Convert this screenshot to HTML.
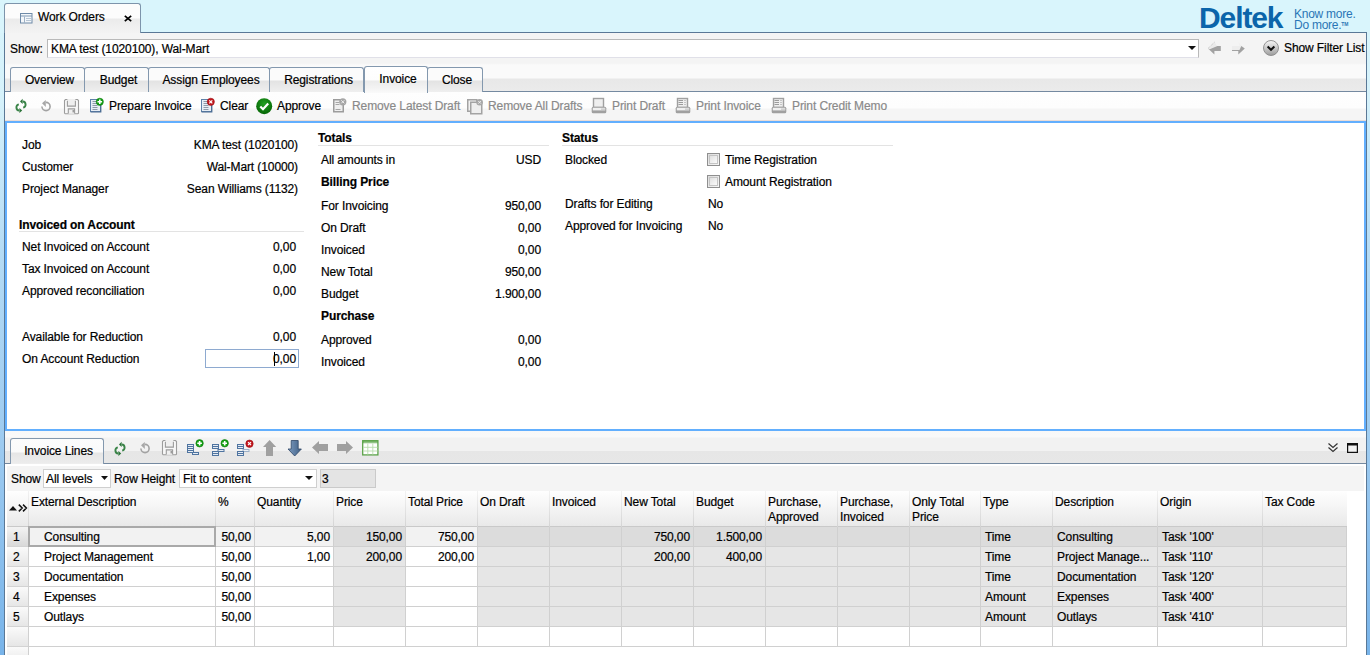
<!DOCTYPE html>
<html><head><meta charset="utf-8">
<style>
*{margin:0;padding:0;box-sizing:border-box}
html,body{width:1370px;height:655px;overflow:hidden}
body{position:relative;font-family:"Liberation Sans",sans-serif;font-size:12px;color:#000;-webkit-text-stroke:0.2px;
background:linear-gradient(to bottom,#d9f5fc 0px,#d6f2fb 100px,#b6dcf5 250px,#9ccaf0 450px,#78b4ea 655px)}
.a{position:absolute}
.t{position:absolute;white-space:nowrap;line-height:15px;letter-spacing:-0.1px}
.r{text-align:right}
.b{font-weight:bold}
.g{color:#8a8a8a}
.tab{position:absolute;top:67px;height:25px;border:1px solid #8398ae;border-bottom:none;border-radius:3px 3px 0 0;
background:linear-gradient(#fbfbfb 0,#fbfbfb 12px,#e3e3e3 13px,#efefef 24px)}
.tab span{position:absolute;left:4px;right:0;top:5px;text-align:center;line-height:15px;white-space:nowrap;letter-spacing:-0.1px}
svg{position:absolute;overflow:visible}
</style></head><body>

<div class="a" style="left:0;top:0;width:1370px;height:33px;background:#d9f5fc"></div>
<div class="a" style="left:4px;top:32px;width:1363px;height:623px;background:#f4f4f4;border-left:1px solid #5a7896;border-right:1px solid #5a7896"></div>
<div class="a" style="left:140px;top:32px;width:1227px;height:1px;background:#5a7896"></div>
<div class="a" style="left:4px;top:3px;width:137px;height:30px;border:1px solid #7d94ab;border-bottom:none;border-radius:3px 3px 0 0;background:linear-gradient(#fcfcfc 0,#fcfcfc 14px,#ebebeb 15px,#f3f3f3 29px)"></div>
<div class="t" style="left:38px;top:10px">Work Orders</div>
<div class="t" style="left:1199px;top:1px;font-size:30px;line-height:34px;color:#0b65aa;letter-spacing:-1.1px;font-weight:bold;-webkit-text-stroke:0">Deltek</div>
<div class="t" style="left:1294px;top:9px;font-size:12px;line-height:11.4px;color:#2a76b6;letter-spacing:-0.25px;-webkit-text-stroke:0">Know more.<br>Do more.<span style="font-size:5px;vertical-align:top;line-height:8px;font-weight:bold">TM</span></div>
<div class="t" style="left:10px;top:42px">Show:</div>
<div class="a" style="left:47px;top:39px;width:1152px;height:19px;background:#fff;border:1px solid #b9b9b9;border-bottom-color:#e0e0e8"></div>
<div class="t" style="left:51px;top:42px">KMA test (1020100), Wal-Mart</div>
<div class="t" style="left:1284px;top:41px">Show Filter List</div>
<div class="a" style="left:5px;top:63px;width:1361px;height:29px;background:linear-gradient(#f3f3f3 0,#fafafa 2px,#fafafa 15px,#e8e8e8 16px,#ebebeb 28px)"></div>
<div class="a" style="left:5px;top:91px;width:1361px;height:1px;background:#7489a0"></div>
<div class="tab" style="left:10px;width:75px"><span>Overview</span></div>
<div class="tab" style="left:84px;width:65px"><span>Budget</span></div>
<div class="tab" style="left:148px;width:122px"><span>Assign Employees</span></div>
<div class="tab" style="left:269px;width:95px"><span>Registrations</span></div>
<div class="tab" style="left:427px;width:56px"><span>Close</span></div>
<div class="tab" style="left:364px;top:66px;width:64px;height:27px;background:linear-gradient(#ffffff 0,#fdfdfd 13px,#ebebeb 14px,#f4f4f4 22px,#fafafa 26px);z-index:2"><span style="top:5px">Invoice</span></div>
<div class="a" style="left:5px;top:92px;width:1361px;height:29px;background:linear-gradient(#fefefe 0,#fdfdfd 16px,#f5f5f5 17px,#f5f5f5 28px)"></div>
<div class="a" style="left:5px;top:120px;width:1361px;height:1px;background:#eadcd6"></div>
<div class="t" style="left:109px;top:99px">Prepare Invoice</div>
<div class="t" style="left:220px;top:99px">Clear</div>
<div class="t" style="left:277px;top:99px">Approve</div>
<div class="t g" style="left:352px;top:99px">Remove Latest Draft</div>
<div class="t g" style="left:488px;top:99px">Remove All Drafts</div>
<div class="t g" style="left:612px;top:99px">Print Draft</div>
<div class="t g" style="left:696px;top:99px">Print Invoice</div>
<div class="t g" style="left:792px;top:99px">Print Credit Memo</div>
<div class="a" style="left:5px;top:121px;width:1361px;height:310px;background:#fff;border:2px solid #62affe"></div>
<div class="t " style="left:22px;top:138px">Job</div>
<div class="t r " style="left:98px;width:200px;top:138px">KMA test (1020100)</div>
<div class="t " style="left:22px;top:160px">Customer</div>
<div class="t r " style="left:98px;width:200px;top:160px">Wal-Mart (10000)</div>
<div class="t " style="left:22px;top:182px">Project Manager</div>
<div class="t r " style="left:98px;width:200px;top:182px">Sean Williams (1132)</div>
<div class="t " style="left:22px;top:240px">Net Invoiced on Account</div>
<div class="t r " style="left:96px;width:200px;top:240px">0,00</div>
<div class="t " style="left:22px;top:262px">Tax Invoiced on Account</div>
<div class="t r " style="left:96px;width:200px;top:262px">0,00</div>
<div class="t " style="left:22px;top:284px">Approved reconciliation</div>
<div class="t r " style="left:96px;width:200px;top:284px">0,00</div>
<div class="t " style="left:22px;top:330px">Available for Reduction</div>
<div class="t r " style="left:96px;width:200px;top:330px">0,00</div>
<div class="t b" style="left:19px;top:218px">Invoiced on Account</div>
<div class="a" style="left:19px;top:231px;width:285px;height:1px;background:#e3e3e3"></div>
<div class="t " style="left:22px;top:352px">On Account Reduction</div>
<div class="a" style="left:205px;top:349px;width:94px;height:19px;border:1px solid #8eaad0;background:#fff"></div>
<div class="t r " style="left:96px;width:200px;top:352px">0,00</div>
<div class="a" style="left:274px;top:352px;width:1px;height:14px;background:#000"></div>
<div class="t b" style="left:318px;top:131px">Totals</div>
<div class="a" style="left:318px;top:145px;width:231px;height:1px;background:#e3e3e3"></div>
<div class="t " style="left:321px;top:153px">All amounts in</div>
<div class="t r " style="left:341px;width:200px;top:153px">USD</div>
<div class="t b" style="left:321px;top:175px">Billing Price</div>
<div class="t " style="left:321px;top:199px">For Invoicing</div>
<div class="t r " style="left:341px;width:200px;top:199px">950,00</div>
<div class="t " style="left:321px;top:221px">On Draft</div>
<div class="t r " style="left:341px;width:200px;top:221px">0,00</div>
<div class="t " style="left:321px;top:243px">Invoiced</div>
<div class="t r " style="left:341px;width:200px;top:243px">0,00</div>
<div class="t " style="left:321px;top:265px">New Total</div>
<div class="t r " style="left:341px;width:200px;top:265px">950,00</div>
<div class="t " style="left:321px;top:287px">Budget</div>
<div class="t r " style="left:341px;width:200px;top:287px">1.900,00</div>
<div class="t b" style="left:321px;top:309px">Purchase</div>
<div class="t " style="left:321px;top:333px">Approved</div>
<div class="t r " style="left:341px;width:200px;top:333px">0,00</div>
<div class="t " style="left:321px;top:355px">Invoiced</div>
<div class="t r " style="left:341px;width:200px;top:355px">0,00</div>
<div class="t b" style="left:562px;top:131px">Status</div>
<div class="a" style="left:562px;top:145px;width:331px;height:1px;background:#e3e3e3"></div>
<div class="t " style="left:565px;top:153px">Blocked</div>
<div class="t " style="left:725px;top:153px">Time Registration</div>
<div class="t " style="left:725px;top:175px">Amount Registration</div>
<div class="t " style="left:565px;top:197px">Drafts for Editing</div>
<div class="t " style="left:708px;top:197px">No</div>
<div class="t " style="left:565px;top:219px">Approved for Invoicing</div>
<div class="t " style="left:708px;top:219px">No</div>
<div class="a" style="left:707px;top:153px;width:13px;height:13px;border:1px solid #8f8f8f;background:linear-gradient(135deg,#dcdcdc,#f6f6f6)"><div class="a" style="left:1px;top:1px;width:9px;height:9px;border:1px solid #c4c4c4;background:linear-gradient(135deg,#e0e0e0,#fafafa)"></div></div>
<div class="a" style="left:707px;top:175px;width:13px;height:13px;border:1px solid #8f8f8f;background:linear-gradient(135deg,#dcdcdc,#f6f6f6)"><div class="a" style="left:1px;top:1px;width:9px;height:9px;border:1px solid #c4c4c4;background:linear-gradient(135deg,#e0e0e0,#fafafa)"></div></div>

<div class="a" style="left:5px;top:431px;width:1361px;height:224px;background:#fff"></div>
<div class="a" style="left:5px;top:431px;width:1361px;height:33px;background:linear-gradient(#f8f8f8 0,#f9f9f9 6px,#f2f2f2 7px,#f2f2f2 20px,#e6e6e6 20px,#e7e7e7 32px)"></div>
<div class="a" style="left:5px;top:463px;width:1361px;height:1px;background:#7489a0"></div>
<div class="tab" style="left:10px;top:438px;width:94px;height:26px;background:linear-gradient(#fcfcfc 0,#fafafa 13px,#e6e6e6 14px,#ececec 24px,#f0f0f0 25px);z-index:2"><span style="left:3px;top:5px">Invoice Lines</span></div>
<div class="a" style="left:7px;top:466px;width:1357px;height:25px;background:#f4f4f4"></div>
<div class="t" style="left:11px;top:472px">Show</div>
<div class="a" style="left:43px;top:469px;width:68px;height:19px;background:#fff;border:1px solid #cfcfcf"></div>
<div class="t" style="left:46px;top:472px">All levels</div>
<div class="t" style="left:114px;top:472px">Row Height</div>
<div class="a" style="left:179px;top:469px;width:138px;height:19px;background:#fff;border:1px solid #cfcfcf"></div>
<div class="t" style="left:183px;top:472px">Fit to content</div>
<div class="a" style="left:320px;top:469px;width:56px;height:19px;background:#e4e4e4;border:1px solid #cacaca"></div>
<div class="t" style="left:322px;top:472px">3</div>
<div class="a" style="left:7px;top:491px;width:1340px;height:36px;background:linear-gradient(#fefefe,#f6f6f6 40%,#e9e9e9);border-bottom:1px solid #c9c9c9"></div>
<svg style="position:absolute;left:9px;top:506px" width="8" height="5"><path d="M0 4.5 L4 0 L8 4.5 Z" fill="#111"/></svg>
<svg style="position:absolute;left:18px;top:504px" width="11" height="8"><path d="M0.8 0.6 L4.2 4 L0.8 7.4 M5 0.6 L8.4 4 L5 7.4" fill="none" stroke="#111" stroke-width="1.5"/></svg>
<div class="a" style="left:28px;top:491px;width:1px;height:36px;background:linear-gradient(#f2f2f2,#d4d4d4)"></div>
<div class="t" style="left:31px;top:495px">External Description</div>
<div class="a" style="left:215px;top:491px;width:1px;height:36px;background:linear-gradient(#f2f2f2,#d4d4d4)"></div>
<div class="t" style="left:218px;top:495px">%</div>
<div class="a" style="left:254px;top:491px;width:1px;height:36px;background:linear-gradient(#f2f2f2,#d4d4d4)"></div>
<div class="t" style="left:257px;top:495px">Quantity</div>
<div class="a" style="left:333px;top:491px;width:1px;height:36px;background:linear-gradient(#f2f2f2,#d4d4d4)"></div>
<div class="t" style="left:336px;top:495px">Price</div>
<div class="a" style="left:405px;top:491px;width:1px;height:36px;background:linear-gradient(#f2f2f2,#d4d4d4)"></div>
<div class="t" style="left:408px;top:495px">Total Price</div>
<div class="a" style="left:477px;top:491px;width:1px;height:36px;background:linear-gradient(#f2f2f2,#d4d4d4)"></div>
<div class="t" style="left:480px;top:495px">On Draft</div>
<div class="a" style="left:549px;top:491px;width:1px;height:36px;background:linear-gradient(#f2f2f2,#d4d4d4)"></div>
<div class="t" style="left:552px;top:495px">Invoiced</div>
<div class="a" style="left:621px;top:491px;width:1px;height:36px;background:linear-gradient(#f2f2f2,#d4d4d4)"></div>
<div class="t" style="left:624px;top:495px">New Total</div>
<div class="a" style="left:693px;top:491px;width:1px;height:36px;background:linear-gradient(#f2f2f2,#d4d4d4)"></div>
<div class="t" style="left:696px;top:495px">Budget</div>
<div class="a" style="left:765px;top:491px;width:1px;height:36px;background:linear-gradient(#f2f2f2,#d4d4d4)"></div>
<div class="t" style="left:768px;top:495px">Purchase,<br>Approved</div>
<div class="a" style="left:837px;top:491px;width:1px;height:36px;background:linear-gradient(#f2f2f2,#d4d4d4)"></div>
<div class="t" style="left:840px;top:495px">Purchase,<br>Invoiced</div>
<div class="a" style="left:909px;top:491px;width:1px;height:36px;background:linear-gradient(#f2f2f2,#d4d4d4)"></div>
<div class="t" style="left:912px;top:495px">Only Total<br>Price</div>
<div class="a" style="left:980px;top:491px;width:1px;height:36px;background:linear-gradient(#f2f2f2,#d4d4d4)"></div>
<div class="t" style="left:983px;top:495px">Type</div>
<div class="a" style="left:1052px;top:491px;width:1px;height:36px;background:linear-gradient(#f2f2f2,#d4d4d4)"></div>
<div class="t" style="left:1055px;top:495px">Description</div>
<div class="a" style="left:1157px;top:491px;width:1px;height:36px;background:linear-gradient(#f2f2f2,#d4d4d4)"></div>
<div class="t" style="left:1160px;top:495px">Origin</div>
<div class="a" style="left:1262px;top:491px;width:1px;height:36px;background:linear-gradient(#f2f2f2,#d4d4d4)"></div>
<div class="t" style="left:1265px;top:495px">Tax Code</div>
<div class="a" style="left:7px;top:527px;width:21px;height:20px;background:linear-gradient(#f3f3f3,#d9d9d9);border-bottom:1px solid #d3d3d3"></div>
<div class="t" style="left:13px;top:530px">1</div>
<div class="a" style="left:28px;top:527px;width:188px;height:20px;background:#f2f2f2;border-left:1px solid #d0d0d0;border-right:1px solid #d0d0d0;border-bottom:1px solid #d0d0d0"></div>
<div class="t" style="left:44px;top:530px">Consulting</div>
<div class="a" style="left:215px;top:527px;width:40px;height:20px;background:#f2f2f2;border-left:1px solid #d0d0d0;border-right:1px solid #d0d0d0;border-bottom:1px solid #d0d0d0"></div>
<div class="t r" style="left:215px;width:36px;top:530px">50,00</div>
<div class="a" style="left:254px;top:527px;width:80px;height:20px;background:#f2f2f2;border-left:1px solid #d0d0d0;border-right:1px solid #d0d0d0;border-bottom:1px solid #d0d0d0"></div>
<div class="t r" style="left:254px;width:76px;top:530px">5,00</div>
<div class="a" style="left:333px;top:527px;width:73px;height:20px;background:#dcdcdc;border-left:1px solid #d0d0d0;border-right:1px solid #d0d0d0;border-bottom:1px solid #d0d0d0"></div>
<div class="t r" style="left:333px;width:69px;top:530px">150,00</div>
<div class="a" style="left:405px;top:527px;width:73px;height:20px;background:#f2f2f2;border-left:1px solid #d0d0d0;border-right:1px solid #d0d0d0;border-bottom:1px solid #d0d0d0"></div>
<div class="t r" style="left:405px;width:69px;top:530px">750,00</div>
<div class="a" style="left:477px;top:527px;width:73px;height:20px;background:#dcdcdc;border-left:1px solid #d0d0d0;border-right:1px solid #d0d0d0;border-bottom:1px solid #d0d0d0"></div>
<div class="a" style="left:549px;top:527px;width:73px;height:20px;background:#dcdcdc;border-left:1px solid #d0d0d0;border-right:1px solid #d0d0d0;border-bottom:1px solid #d0d0d0"></div>
<div class="a" style="left:621px;top:527px;width:73px;height:20px;background:#dcdcdc;border-left:1px solid #d0d0d0;border-right:1px solid #d0d0d0;border-bottom:1px solid #d0d0d0"></div>
<div class="t r" style="left:621px;width:69px;top:530px">750,00</div>
<div class="a" style="left:693px;top:527px;width:73px;height:20px;background:#dcdcdc;border-left:1px solid #d0d0d0;border-right:1px solid #d0d0d0;border-bottom:1px solid #d0d0d0"></div>
<div class="t r" style="left:693px;width:69px;top:530px">1.500,00</div>
<div class="a" style="left:765px;top:527px;width:73px;height:20px;background:#dcdcdc;border-left:1px solid #d0d0d0;border-right:1px solid #d0d0d0;border-bottom:1px solid #d0d0d0"></div>
<div class="a" style="left:837px;top:527px;width:73px;height:20px;background:#dcdcdc;border-left:1px solid #d0d0d0;border-right:1px solid #d0d0d0;border-bottom:1px solid #d0d0d0"></div>
<div class="a" style="left:909px;top:527px;width:72px;height:20px;background:#dcdcdc;border-left:1px solid #d0d0d0;border-right:1px solid #d0d0d0;border-bottom:1px solid #d0d0d0"></div>
<div class="a" style="left:980px;top:527px;width:73px;height:20px;background:#dcdcdc;border-left:1px solid #d0d0d0;border-right:1px solid #d0d0d0;border-bottom:1px solid #d0d0d0"></div>
<div class="t" style="left:985px;top:530px">Time</div>
<div class="a" style="left:1052px;top:527px;width:106px;height:20px;background:#dcdcdc;border-left:1px solid #d0d0d0;border-right:1px solid #d0d0d0;border-bottom:1px solid #d0d0d0"></div>
<div class="t" style="left:1057px;top:530px">Consulting</div>
<div class="a" style="left:1157px;top:527px;width:106px;height:20px;background:#dcdcdc;border-left:1px solid #d0d0d0;border-right:1px solid #d0d0d0;border-bottom:1px solid #d0d0d0"></div>
<div class="t" style="left:1162px;top:530px">Task '100'</div>
<div class="a" style="left:1262px;top:527px;width:85px;height:20px;background:#dcdcdc;border-left:1px solid #d0d0d0;border-right:1px solid #d0d0d0;border-bottom:1px solid #d0d0d0"></div>
<div class="a" style="left:7px;top:547px;width:21px;height:20px;background:linear-gradient(#fafafa,#e6e6e6);border-bottom:1px solid #d3d3d3"></div>
<div class="t" style="left:13px;top:550px">2</div>
<div class="a" style="left:28px;top:547px;width:188px;height:20px;background:#ffffff;border-left:1px solid #d0d0d0;border-right:1px solid #d0d0d0;border-bottom:1px solid #d0d0d0"></div>
<div class="t" style="left:44px;top:550px">Project Management</div>
<div class="a" style="left:215px;top:547px;width:40px;height:20px;background:#ffffff;border-left:1px solid #d0d0d0;border-right:1px solid #d0d0d0;border-bottom:1px solid #d0d0d0"></div>
<div class="t r" style="left:215px;width:36px;top:550px">50,00</div>
<div class="a" style="left:254px;top:547px;width:80px;height:20px;background:#ffffff;border-left:1px solid #d0d0d0;border-right:1px solid #d0d0d0;border-bottom:1px solid #d0d0d0"></div>
<div class="t r" style="left:254px;width:76px;top:550px">1,00</div>
<div class="a" style="left:333px;top:547px;width:73px;height:20px;background:#e6e6e6;border-left:1px solid #d0d0d0;border-right:1px solid #d0d0d0;border-bottom:1px solid #d0d0d0"></div>
<div class="t r" style="left:333px;width:69px;top:550px">200,00</div>
<div class="a" style="left:405px;top:547px;width:73px;height:20px;background:#ffffff;border-left:1px solid #d0d0d0;border-right:1px solid #d0d0d0;border-bottom:1px solid #d0d0d0"></div>
<div class="t r" style="left:405px;width:69px;top:550px">200,00</div>
<div class="a" style="left:477px;top:547px;width:73px;height:20px;background:#e6e6e6;border-left:1px solid #d0d0d0;border-right:1px solid #d0d0d0;border-bottom:1px solid #d0d0d0"></div>
<div class="a" style="left:549px;top:547px;width:73px;height:20px;background:#e6e6e6;border-left:1px solid #d0d0d0;border-right:1px solid #d0d0d0;border-bottom:1px solid #d0d0d0"></div>
<div class="a" style="left:621px;top:547px;width:73px;height:20px;background:#e6e6e6;border-left:1px solid #d0d0d0;border-right:1px solid #d0d0d0;border-bottom:1px solid #d0d0d0"></div>
<div class="t r" style="left:621px;width:69px;top:550px">200,00</div>
<div class="a" style="left:693px;top:547px;width:73px;height:20px;background:#e6e6e6;border-left:1px solid #d0d0d0;border-right:1px solid #d0d0d0;border-bottom:1px solid #d0d0d0"></div>
<div class="t r" style="left:693px;width:69px;top:550px">400,00</div>
<div class="a" style="left:765px;top:547px;width:73px;height:20px;background:#e6e6e6;border-left:1px solid #d0d0d0;border-right:1px solid #d0d0d0;border-bottom:1px solid #d0d0d0"></div>
<div class="a" style="left:837px;top:547px;width:73px;height:20px;background:#e6e6e6;border-left:1px solid #d0d0d0;border-right:1px solid #d0d0d0;border-bottom:1px solid #d0d0d0"></div>
<div class="a" style="left:909px;top:547px;width:72px;height:20px;background:#e6e6e6;border-left:1px solid #d0d0d0;border-right:1px solid #d0d0d0;border-bottom:1px solid #d0d0d0"></div>
<div class="a" style="left:980px;top:547px;width:73px;height:20px;background:#e6e6e6;border-left:1px solid #d0d0d0;border-right:1px solid #d0d0d0;border-bottom:1px solid #d0d0d0"></div>
<div class="t" style="left:985px;top:550px">Time</div>
<div class="a" style="left:1052px;top:547px;width:106px;height:20px;background:#e6e6e6;border-left:1px solid #d0d0d0;border-right:1px solid #d0d0d0;border-bottom:1px solid #d0d0d0"></div>
<div class="t" style="left:1057px;top:550px">Project Manage...</div>
<div class="a" style="left:1157px;top:547px;width:106px;height:20px;background:#e6e6e6;border-left:1px solid #d0d0d0;border-right:1px solid #d0d0d0;border-bottom:1px solid #d0d0d0"></div>
<div class="t" style="left:1162px;top:550px">Task '110'</div>
<div class="a" style="left:1262px;top:547px;width:85px;height:20px;background:#e6e6e6;border-left:1px solid #d0d0d0;border-right:1px solid #d0d0d0;border-bottom:1px solid #d0d0d0"></div>
<div class="a" style="left:7px;top:567px;width:21px;height:20px;background:linear-gradient(#fafafa,#e6e6e6);border-bottom:1px solid #d3d3d3"></div>
<div class="t" style="left:13px;top:570px">3</div>
<div class="a" style="left:28px;top:567px;width:188px;height:20px;background:#ffffff;border-left:1px solid #d0d0d0;border-right:1px solid #d0d0d0;border-bottom:1px solid #d0d0d0"></div>
<div class="t" style="left:44px;top:570px">Documentation</div>
<div class="a" style="left:215px;top:567px;width:40px;height:20px;background:#ffffff;border-left:1px solid #d0d0d0;border-right:1px solid #d0d0d0;border-bottom:1px solid #d0d0d0"></div>
<div class="t r" style="left:215px;width:36px;top:570px">50,00</div>
<div class="a" style="left:254px;top:567px;width:80px;height:20px;background:#ffffff;border-left:1px solid #d0d0d0;border-right:1px solid #d0d0d0;border-bottom:1px solid #d0d0d0"></div>
<div class="a" style="left:333px;top:567px;width:73px;height:20px;background:#e6e6e6;border-left:1px solid #d0d0d0;border-right:1px solid #d0d0d0;border-bottom:1px solid #d0d0d0"></div>
<div class="a" style="left:405px;top:567px;width:73px;height:20px;background:#ffffff;border-left:1px solid #d0d0d0;border-right:1px solid #d0d0d0;border-bottom:1px solid #d0d0d0"></div>
<div class="a" style="left:477px;top:567px;width:73px;height:20px;background:#e6e6e6;border-left:1px solid #d0d0d0;border-right:1px solid #d0d0d0;border-bottom:1px solid #d0d0d0"></div>
<div class="a" style="left:549px;top:567px;width:73px;height:20px;background:#e6e6e6;border-left:1px solid #d0d0d0;border-right:1px solid #d0d0d0;border-bottom:1px solid #d0d0d0"></div>
<div class="a" style="left:621px;top:567px;width:73px;height:20px;background:#e6e6e6;border-left:1px solid #d0d0d0;border-right:1px solid #d0d0d0;border-bottom:1px solid #d0d0d0"></div>
<div class="a" style="left:693px;top:567px;width:73px;height:20px;background:#e6e6e6;border-left:1px solid #d0d0d0;border-right:1px solid #d0d0d0;border-bottom:1px solid #d0d0d0"></div>
<div class="a" style="left:765px;top:567px;width:73px;height:20px;background:#e6e6e6;border-left:1px solid #d0d0d0;border-right:1px solid #d0d0d0;border-bottom:1px solid #d0d0d0"></div>
<div class="a" style="left:837px;top:567px;width:73px;height:20px;background:#e6e6e6;border-left:1px solid #d0d0d0;border-right:1px solid #d0d0d0;border-bottom:1px solid #d0d0d0"></div>
<div class="a" style="left:909px;top:567px;width:72px;height:20px;background:#e6e6e6;border-left:1px solid #d0d0d0;border-right:1px solid #d0d0d0;border-bottom:1px solid #d0d0d0"></div>
<div class="a" style="left:980px;top:567px;width:73px;height:20px;background:#e6e6e6;border-left:1px solid #d0d0d0;border-right:1px solid #d0d0d0;border-bottom:1px solid #d0d0d0"></div>
<div class="t" style="left:985px;top:570px">Time</div>
<div class="a" style="left:1052px;top:567px;width:106px;height:20px;background:#e6e6e6;border-left:1px solid #d0d0d0;border-right:1px solid #d0d0d0;border-bottom:1px solid #d0d0d0"></div>
<div class="t" style="left:1057px;top:570px">Documentation</div>
<div class="a" style="left:1157px;top:567px;width:106px;height:20px;background:#e6e6e6;border-left:1px solid #d0d0d0;border-right:1px solid #d0d0d0;border-bottom:1px solid #d0d0d0"></div>
<div class="t" style="left:1162px;top:570px">Task '120'</div>
<div class="a" style="left:1262px;top:567px;width:85px;height:20px;background:#e6e6e6;border-left:1px solid #d0d0d0;border-right:1px solid #d0d0d0;border-bottom:1px solid #d0d0d0"></div>
<div class="a" style="left:7px;top:587px;width:21px;height:20px;background:linear-gradient(#fafafa,#e6e6e6);border-bottom:1px solid #d3d3d3"></div>
<div class="t" style="left:13px;top:590px">4</div>
<div class="a" style="left:28px;top:587px;width:188px;height:20px;background:#ffffff;border-left:1px solid #d0d0d0;border-right:1px solid #d0d0d0;border-bottom:1px solid #d0d0d0"></div>
<div class="t" style="left:44px;top:590px">Expenses</div>
<div class="a" style="left:215px;top:587px;width:40px;height:20px;background:#ffffff;border-left:1px solid #d0d0d0;border-right:1px solid #d0d0d0;border-bottom:1px solid #d0d0d0"></div>
<div class="t r" style="left:215px;width:36px;top:590px">50,00</div>
<div class="a" style="left:254px;top:587px;width:80px;height:20px;background:#ffffff;border-left:1px solid #d0d0d0;border-right:1px solid #d0d0d0;border-bottom:1px solid #d0d0d0"></div>
<div class="a" style="left:333px;top:587px;width:73px;height:20px;background:#e6e6e6;border-left:1px solid #d0d0d0;border-right:1px solid #d0d0d0;border-bottom:1px solid #d0d0d0"></div>
<div class="a" style="left:405px;top:587px;width:73px;height:20px;background:#ffffff;border-left:1px solid #d0d0d0;border-right:1px solid #d0d0d0;border-bottom:1px solid #d0d0d0"></div>
<div class="a" style="left:477px;top:587px;width:73px;height:20px;background:#e6e6e6;border-left:1px solid #d0d0d0;border-right:1px solid #d0d0d0;border-bottom:1px solid #d0d0d0"></div>
<div class="a" style="left:549px;top:587px;width:73px;height:20px;background:#e6e6e6;border-left:1px solid #d0d0d0;border-right:1px solid #d0d0d0;border-bottom:1px solid #d0d0d0"></div>
<div class="a" style="left:621px;top:587px;width:73px;height:20px;background:#e6e6e6;border-left:1px solid #d0d0d0;border-right:1px solid #d0d0d0;border-bottom:1px solid #d0d0d0"></div>
<div class="a" style="left:693px;top:587px;width:73px;height:20px;background:#e6e6e6;border-left:1px solid #d0d0d0;border-right:1px solid #d0d0d0;border-bottom:1px solid #d0d0d0"></div>
<div class="a" style="left:765px;top:587px;width:73px;height:20px;background:#e6e6e6;border-left:1px solid #d0d0d0;border-right:1px solid #d0d0d0;border-bottom:1px solid #d0d0d0"></div>
<div class="a" style="left:837px;top:587px;width:73px;height:20px;background:#e6e6e6;border-left:1px solid #d0d0d0;border-right:1px solid #d0d0d0;border-bottom:1px solid #d0d0d0"></div>
<div class="a" style="left:909px;top:587px;width:72px;height:20px;background:#e6e6e6;border-left:1px solid #d0d0d0;border-right:1px solid #d0d0d0;border-bottom:1px solid #d0d0d0"></div>
<div class="a" style="left:980px;top:587px;width:73px;height:20px;background:#e6e6e6;border-left:1px solid #d0d0d0;border-right:1px solid #d0d0d0;border-bottom:1px solid #d0d0d0"></div>
<div class="t" style="left:985px;top:590px">Amount</div>
<div class="a" style="left:1052px;top:587px;width:106px;height:20px;background:#e6e6e6;border-left:1px solid #d0d0d0;border-right:1px solid #d0d0d0;border-bottom:1px solid #d0d0d0"></div>
<div class="t" style="left:1057px;top:590px">Expenses</div>
<div class="a" style="left:1157px;top:587px;width:106px;height:20px;background:#e6e6e6;border-left:1px solid #d0d0d0;border-right:1px solid #d0d0d0;border-bottom:1px solid #d0d0d0"></div>
<div class="t" style="left:1162px;top:590px">Task '400'</div>
<div class="a" style="left:1262px;top:587px;width:85px;height:20px;background:#e6e6e6;border-left:1px solid #d0d0d0;border-right:1px solid #d0d0d0;border-bottom:1px solid #d0d0d0"></div>
<div class="a" style="left:7px;top:607px;width:21px;height:20px;background:linear-gradient(#fafafa,#e6e6e6);border-bottom:1px solid #d3d3d3"></div>
<div class="t" style="left:13px;top:610px">5</div>
<div class="a" style="left:28px;top:607px;width:188px;height:20px;background:#ffffff;border-left:1px solid #d0d0d0;border-right:1px solid #d0d0d0;border-bottom:1px solid #d0d0d0"></div>
<div class="t" style="left:44px;top:610px">Outlays</div>
<div class="a" style="left:215px;top:607px;width:40px;height:20px;background:#ffffff;border-left:1px solid #d0d0d0;border-right:1px solid #d0d0d0;border-bottom:1px solid #d0d0d0"></div>
<div class="t r" style="left:215px;width:36px;top:610px">50,00</div>
<div class="a" style="left:254px;top:607px;width:80px;height:20px;background:#ffffff;border-left:1px solid #d0d0d0;border-right:1px solid #d0d0d0;border-bottom:1px solid #d0d0d0"></div>
<div class="a" style="left:333px;top:607px;width:73px;height:20px;background:#e6e6e6;border-left:1px solid #d0d0d0;border-right:1px solid #d0d0d0;border-bottom:1px solid #d0d0d0"></div>
<div class="a" style="left:405px;top:607px;width:73px;height:20px;background:#ffffff;border-left:1px solid #d0d0d0;border-right:1px solid #d0d0d0;border-bottom:1px solid #d0d0d0"></div>
<div class="a" style="left:477px;top:607px;width:73px;height:20px;background:#e6e6e6;border-left:1px solid #d0d0d0;border-right:1px solid #d0d0d0;border-bottom:1px solid #d0d0d0"></div>
<div class="a" style="left:549px;top:607px;width:73px;height:20px;background:#e6e6e6;border-left:1px solid #d0d0d0;border-right:1px solid #d0d0d0;border-bottom:1px solid #d0d0d0"></div>
<div class="a" style="left:621px;top:607px;width:73px;height:20px;background:#e6e6e6;border-left:1px solid #d0d0d0;border-right:1px solid #d0d0d0;border-bottom:1px solid #d0d0d0"></div>
<div class="a" style="left:693px;top:607px;width:73px;height:20px;background:#e6e6e6;border-left:1px solid #d0d0d0;border-right:1px solid #d0d0d0;border-bottom:1px solid #d0d0d0"></div>
<div class="a" style="left:765px;top:607px;width:73px;height:20px;background:#e6e6e6;border-left:1px solid #d0d0d0;border-right:1px solid #d0d0d0;border-bottom:1px solid #d0d0d0"></div>
<div class="a" style="left:837px;top:607px;width:73px;height:20px;background:#e6e6e6;border-left:1px solid #d0d0d0;border-right:1px solid #d0d0d0;border-bottom:1px solid #d0d0d0"></div>
<div class="a" style="left:909px;top:607px;width:72px;height:20px;background:#e6e6e6;border-left:1px solid #d0d0d0;border-right:1px solid #d0d0d0;border-bottom:1px solid #d0d0d0"></div>
<div class="a" style="left:980px;top:607px;width:73px;height:20px;background:#e6e6e6;border-left:1px solid #d0d0d0;border-right:1px solid #d0d0d0;border-bottom:1px solid #d0d0d0"></div>
<div class="t" style="left:985px;top:610px">Amount</div>
<div class="a" style="left:1052px;top:607px;width:106px;height:20px;background:#e6e6e6;border-left:1px solid #d0d0d0;border-right:1px solid #d0d0d0;border-bottom:1px solid #d0d0d0"></div>
<div class="t" style="left:1057px;top:610px">Outlays</div>
<div class="a" style="left:1157px;top:607px;width:106px;height:20px;background:#e6e6e6;border-left:1px solid #d0d0d0;border-right:1px solid #d0d0d0;border-bottom:1px solid #d0d0d0"></div>
<div class="t" style="left:1162px;top:610px">Task '410'</div>
<div class="a" style="left:1262px;top:607px;width:85px;height:20px;background:#e6e6e6;border-left:1px solid #d0d0d0;border-right:1px solid #d0d0d0;border-bottom:1px solid #d0d0d0"></div>
<div class="a" style="left:7px;top:627px;width:21px;height:20px;background:linear-gradient(#fafafa,#e6e6e6);border-bottom:1px solid #d3d3d3"></div>
<div class="a" style="left:28px;top:627px;width:188px;height:20px;background:#ffffff;border-left:1px solid #d0d0d0;border-right:1px solid #d0d0d0;border-bottom:1px solid #d0d0d0"></div>
<div class="a" style="left:215px;top:627px;width:40px;height:20px;background:#ffffff;border-left:1px solid #d0d0d0;border-right:1px solid #d0d0d0;border-bottom:1px solid #d0d0d0"></div>
<div class="a" style="left:254px;top:627px;width:80px;height:20px;background:#ffffff;border-left:1px solid #d0d0d0;border-right:1px solid #d0d0d0;border-bottom:1px solid #d0d0d0"></div>
<div class="a" style="left:333px;top:627px;width:73px;height:20px;background:#ffffff;border-left:1px solid #d0d0d0;border-right:1px solid #d0d0d0;border-bottom:1px solid #d0d0d0"></div>
<div class="a" style="left:405px;top:627px;width:73px;height:20px;background:#ffffff;border-left:1px solid #d0d0d0;border-right:1px solid #d0d0d0;border-bottom:1px solid #d0d0d0"></div>
<div class="a" style="left:477px;top:627px;width:73px;height:20px;background:#ffffff;border-left:1px solid #d0d0d0;border-right:1px solid #d0d0d0;border-bottom:1px solid #d0d0d0"></div>
<div class="a" style="left:549px;top:627px;width:73px;height:20px;background:#ffffff;border-left:1px solid #d0d0d0;border-right:1px solid #d0d0d0;border-bottom:1px solid #d0d0d0"></div>
<div class="a" style="left:621px;top:627px;width:73px;height:20px;background:#ffffff;border-left:1px solid #d0d0d0;border-right:1px solid #d0d0d0;border-bottom:1px solid #d0d0d0"></div>
<div class="a" style="left:693px;top:627px;width:73px;height:20px;background:#ffffff;border-left:1px solid #d0d0d0;border-right:1px solid #d0d0d0;border-bottom:1px solid #d0d0d0"></div>
<div class="a" style="left:765px;top:627px;width:73px;height:20px;background:#ffffff;border-left:1px solid #d0d0d0;border-right:1px solid #d0d0d0;border-bottom:1px solid #d0d0d0"></div>
<div class="a" style="left:837px;top:627px;width:73px;height:20px;background:#ffffff;border-left:1px solid #d0d0d0;border-right:1px solid #d0d0d0;border-bottom:1px solid #d0d0d0"></div>
<div class="a" style="left:909px;top:627px;width:72px;height:20px;background:#ffffff;border-left:1px solid #d0d0d0;border-right:1px solid #d0d0d0;border-bottom:1px solid #d0d0d0"></div>
<div class="a" style="left:980px;top:627px;width:73px;height:20px;background:#ffffff;border-left:1px solid #d0d0d0;border-right:1px solid #d0d0d0;border-bottom:1px solid #d0d0d0"></div>
<div class="a" style="left:1052px;top:627px;width:106px;height:20px;background:#ffffff;border-left:1px solid #d0d0d0;border-right:1px solid #d0d0d0;border-bottom:1px solid #d0d0d0"></div>
<div class="a" style="left:1157px;top:627px;width:106px;height:20px;background:#ffffff;border-left:1px solid #d0d0d0;border-right:1px solid #d0d0d0;border-bottom:1px solid #d0d0d0"></div>
<div class="a" style="left:1262px;top:627px;width:85px;height:20px;background:#ffffff;border-left:1px solid #d0d0d0;border-right:1px solid #d0d0d0;border-bottom:1px solid #d0d0d0"></div>
<div class="a" style="left:7px;top:647px;width:21px;height:20px;background:linear-gradient(#fafafa,#e6e6e6);border-bottom:1px solid #d3d3d3"></div>
<div class="a" style="left:28px;top:647px;width:1px;height:20px;background:#d0d0d0"></div>
<div class="a" style="left:28px;top:526px;width:188px;height:21px;border:2px solid #a9a9a9"></div>
<svg style="left:20px;top:13px" width="13" height="11" viewBox="0 0 13 11"><rect x="0.5" y="0.5" width="11.5" height="9.5" fill="#f4f7fa" stroke="#6e8aa8"/><path d="M1 3 H12" stroke="#7f98b3"/><path d="M4.5 3.5 V10" stroke="#9fb2c6"/><path d="M6 5.5 H11 M6 7.5 H11" stroke="#b7c6d5"/></svg>
<svg style="left:124px;top:15px" width="8" height="7" viewBox="0 0 8 7"><path d="M0.8 0.8 L7.2 6.2 M7.2 0.8 L0.8 6.2" stroke="#000" stroke-width="1.7"/></svg>
<svg style="left:1188px;top:46px" width="8" height="4" viewBox="0 0 8 4"><path d="M0 0 H8 L4.0 4 Z" fill="#111"/></svg>
<svg style="left:1204px;top:38px" width="44" height="20" viewBox="0 0 44 20"><path d="M4 10.4 L10.7 4 L12.6 7.6 L13.4 8 L5.7 11.2 Z" fill="#ebebeb"/>
<path d="M4 10.4 L10.7 4" stroke="#b4b4b4" stroke-width="0.8" stroke-dasharray="1 1"/>
<path d="M4 10.4 L10.4 16.5 L10.4 12.9 L16.8 12.9 L16.8 8 L13.4 8 L5.7 11.2 Z" fill="#a2a2a2"/>
<path d="M28 8 H36 L34.3 4 L37.3 7.9 L36 11.9 H28 Z" fill="#ededed"/>
<path d="M28 11.9 L35.5 11.9 L37.3 7.9 L40.8 10.4 L34.3 16.5 L34.3 12.9 L28 12.9 Z" fill="#a2a2a2"/></svg>
<svg style="left:1263px;top:40px" width="17" height="17" viewBox="0 0 17 17"><defs><linearGradient id="gc" x1="0" y1="0" x2="0" y2="1"><stop offset="0" stop-color="#f8f8f8"/><stop offset="1" stop-color="#9c9c9c"/></linearGradient></defs>
<circle cx="8" cy="8" r="7.5" fill="url(#gc)" stroke="#8a8a8a" stroke-width="0.9"/><path d="M4.6 6.6 L8 9.8 L11.4 6.6" fill="none" stroke="#111" stroke-width="2"/></svg>
<svg style="left:13px;top:97px" width="15" height="17" viewBox="0 0 15 17"><g fill="none" stroke="#2f7d3e" stroke-width="1.9">
<path d="M9.8 4.5 A3.1 3.1 0 0 1 10.2 10.6" stroke-opacity="0.95"/><path d="M6.2 13.5 A3.1 3.1 0 0 1 5.8 7.4" stroke-opacity="0.95"/></g>
<path d="M7.0 4.5 L9.6 1.8 L9.6 7.0 Z" fill="#2a7338"/><path d="M9.2 13.5 L6.4 10.9 L6.4 16.1 Z" fill="#2a7338"/></svg>
<svg style="left:40px;top:99px" width="13" height="14" viewBox="0 0 13 14"><path d="M6 3.4 A4.1 4.1 0 1 1 1.9 7.6" fill="none" stroke="#a2a2a2" stroke-width="1.6"/>
<path d="M2 4.2 L5.8 0.9 L5.8 7.9 Z" fill="#a8a8a8"/></svg>
<svg style="left:64px;top:99px" width="16" height="16" viewBox="0 0 16 16"><path d="M1.5 0.5 H13.5 L14.5 1.5 V14.3 L13.8 14.8 H1.2 L0.5 14.1 V1.5 Z" fill="#f8f8f8" stroke="#9c9c9c" stroke-width="1.1"/>
<rect x="3.4" y="0" width="8" height="7.5" fill="#efefef"/>
<path d="M3.4 1.8 V7.1 H11.4 V1.8" fill="none" stroke="#9c9c9c" stroke-width="1.1"/>
<rect x="4.3" y="9.9" width="6.3" height="4.9" fill="#f0f0f0"/>
<path d="M4.3 14.6 V9.9 H10.6 V14.6" fill="none" stroke="#9c9c9c" stroke-width="1.1"/>
<rect x="8.5" y="11" width="1.8" height="2.4" fill="#9c9c9c"/></svg>
<svg style="left:90px;top:99px" width="15" height="15" viewBox="0 0 15 15"><rect x="0.5" y="0.5" width="10" height="12" fill="#e8eef5" stroke="#5e81a8"/><path d="M0.5 13 H10.8 V1" fill="none" stroke="#4a6b92" stroke-width="1.2"/><path d="M2.5 2.5 H7.5" stroke="#8f9aa8" stroke-width="1"/><path d="M2.5 4.5 H7.5" stroke="#8f9aa8" stroke-width="1"/><path d="M2.5 6.5 H7.5" stroke="#8f9aa8" stroke-width="1"/><path d="M2.5 8.5 H7.5" stroke="#8f9aa8" stroke-width="1"/><path d="M2.5 10.5 H7.5" stroke="#8f9aa8" stroke-width="1"/><circle cx="9.8" cy="2.8" r="3.6" fill="#12a012" stroke="#0b7a0b" stroke-width="0.6"/><path d="M9.8 0.5 V5.1 M7.500000000000001 2.8 H12.100000000000001" stroke="#fff" stroke-width="1.6"/></svg>
<svg style="left:201px;top:99px" width="15" height="15" viewBox="0 0 15 15"><rect x="0.5" y="0.5" width="10" height="12" fill="#e8eef5" stroke="#5e81a8"/><path d="M0.5 13 H10.8 V1" fill="none" stroke="#4a6b92" stroke-width="1.2"/><path d="M2.5 2.5 H7.5" stroke="#8f9aa8" stroke-width="1"/><path d="M2.5 4.5 H7.5" stroke="#8f9aa8" stroke-width="1"/><path d="M2.5 6.5 H7.5" stroke="#8f9aa8" stroke-width="1"/><path d="M2.5 8.5 H7.5" stroke="#8f9aa8" stroke-width="1"/><path d="M2.5 10.5 H7.5" stroke="#8f9aa8" stroke-width="1"/><circle cx="9.8" cy="2.8" r="3.6" fill="#c3161c" stroke="#9a0f14" stroke-width="0.6"/><path d="M8.3 1.2999999999999998 L11.3 4.3 M11.3 1.2999999999999998 L8.3 4.3" stroke="#fff" stroke-width="1.2"/></svg>
<svg style="left:256px;top:98px" width="17" height="17" viewBox="0 0 17 17"><defs><radialGradient id="ga" cx="50%" cy="35%" r="65%"><stop offset="0" stop-color="#22a022"/><stop offset="1" stop-color="#066606"/></radialGradient></defs>
<circle cx="8.2" cy="8.2" r="8" fill="url(#ga)"/><path d="M4.3 8.5 L7 11.2 L12.2 5.6" fill="none" stroke="#fff" stroke-width="2.2"/></svg>
<svg style="left:333px;top:99px" width="15" height="15" viewBox="0 0 15 15"><rect x="0.75" y="0.75" width="9.5" height="12" fill="#efefef" stroke="#9c9c9c" stroke-width="1.5"/><path d="M2.5 3.5 H6.5 M2.5 5.5 H6.5 M2.5 10.5 H7.5" stroke="#a6a6a6" stroke-width="1"/><circle cx="9.8" cy="2.8" r="3.6" fill="#a6a6a6"/><path d="M8.3 1.2999999999999998 L11.3 4.3 M11.3 1.2999999999999998 L8.3 4.3" stroke="#f0f0f0" stroke-width="1"/></svg>
<svg style="left:467px;top:99px" width="17" height="16" viewBox="0 0 17 16"><rect x="0.75" y="0.75" width="9" height="11.5" fill="#f2f2f2" stroke="#a3a3a3" stroke-width="1.5"/>
<rect x="3.75" y="3.25" width="11" height="11.5" fill="#eeeeee" stroke="#a3a3a3" stroke-width="1.5"/>
<circle cx="12.6" cy="3.3" r="3.3" fill="#a8a8a8"/><path d="M11.3 2 L13.9 4.6 M13.9 2 L11.3 4.6" stroke="#eee" stroke-width="1"/></svg>
<svg style="left:591px;top:98px" width="17" height="16" viewBox="0 0 17 16"><rect x="2.5" y="0.5" width="10" height="9" fill="#efefef" stroke="#a0a0a0" stroke-width="1.4"/>
<rect x="0.7" y="8.7" width="14.6" height="6.6" rx="1.5" fill="#a0a0a0"/>
<rect x="1.8" y="9.8" width="12.4" height="2.6" fill="#f0f0f0"/><circle cx="11" cy="11.1" r="0.7" fill="#999"/><circle cx="13" cy="11.1" r="0.7" fill="#999"/></svg>
<svg style="left:675px;top:98px" width="17" height="16" viewBox="0 0 17 16"><rect x="2.5" y="0.5" width="10" height="9" fill="#efefef" stroke="#a0a0a0" stroke-width="1.4"/><path d="M3.5 2.5 H8 M3.5 4.5 H8 M3.5 6.5 H8" stroke="#9c9c9c" stroke-width="1.2"/><path d="M9.5 2.5 H10.5 M9.5 4.5 H10.5 M9.5 6.5 H10.5" stroke="#9c9c9c" stroke-width="1.2"/>
<rect x="0.7" y="8.7" width="14.6" height="6.6" rx="1.5" fill="#a0a0a0"/>
<rect x="1.8" y="9.8" width="12.4" height="2.6" fill="#f0f0f0"/><circle cx="11" cy="11.1" r="0.7" fill="#999"/><circle cx="13" cy="11.1" r="0.7" fill="#999"/></svg>
<svg style="left:771px;top:98px" width="17" height="16" viewBox="0 0 17 16"><rect x="2.5" y="0.5" width="10" height="9" fill="#efefef" stroke="#a0a0a0" stroke-width="1.4"/><path d="M3.5 2.5 H8 M3.5 4.5 H8 M3.5 6.5 H8" stroke="#9c9c9c" stroke-width="1.2"/><path d="M9.5 2.5 H10.5 M9.5 4.5 H10.5 M9.5 6.5 H10.5" stroke="#9c9c9c" stroke-width="1.2"/>
<rect x="0.7" y="8.7" width="14.6" height="6.6" rx="1.5" fill="#a0a0a0"/>
<rect x="1.8" y="9.8" width="12.4" height="2.6" fill="#f0f0f0"/><circle cx="11" cy="11.1" r="0.7" fill="#999"/><circle cx="13" cy="11.1" r="0.7" fill="#999"/></svg>
<svg style="left:112px;top:440px" width="15" height="17" viewBox="0 0 15 17"><g fill="none" stroke="#2f7d3e" stroke-width="1.9">
<path d="M9.8 4.5 A3.1 3.1 0 0 1 10.2 10.6" stroke-opacity="0.95"/><path d="M6.2 13.5 A3.1 3.1 0 0 1 5.8 7.4" stroke-opacity="0.95"/></g>
<path d="M7.0 4.5 L9.6 1.8 L9.6 7.0 Z" fill="#2a7338"/><path d="M9.2 13.5 L6.4 10.9 L6.4 16.1 Z" fill="#2a7338"/></svg>
<svg style="left:139px;top:441px" width="13" height="14" viewBox="0 0 13 14"><path d="M6 3.4 A4.1 4.1 0 1 1 1.9 7.6" fill="none" stroke="#a2a2a2" stroke-width="1.6"/>
<path d="M2 4.2 L5.8 0.9 L5.8 7.9 Z" fill="#a8a8a8"/></svg>
<svg style="left:162px;top:440px" width="16" height="16" viewBox="0 0 16 16"><path d="M1.5 0.5 H13.5 L14.5 1.5 V14.3 L13.8 14.8 H1.2 L0.5 14.1 V1.5 Z" fill="#f8f8f8" stroke="#9c9c9c" stroke-width="1.1"/>
<rect x="3.4" y="0" width="8" height="7.5" fill="#efefef"/>
<path d="M3.4 1.8 V7.1 H11.4 V1.8" fill="none" stroke="#9c9c9c" stroke-width="1.1"/>
<rect x="4.3" y="9.9" width="6.3" height="4.9" fill="#f0f0f0"/>
<path d="M4.3 14.6 V9.9 H10.6 V14.6" fill="none" stroke="#9c9c9c" stroke-width="1.1"/>
<rect x="8.5" y="11" width="1.8" height="2.4" fill="#9c9c9c"/></svg>
<svg style="left:187px;top:439px" width="17" height="17" viewBox="0 0 17 17"><rect x="0" y="5" width="7" height="9" fill="#4f74a0"/><rect x="1" y="6" width="5" height="1" fill="#e6ecf3"/><rect x="1" y="8" width="5" height="1" fill="#e6ecf3"/><rect x="1" y="10" width="5" height="1" fill="#e6ecf3"/><rect x="1" y="12" width="5" height="1" fill="#e6ecf3"/><rect x="5" y="13" width="7" height="3" fill="#4f74a0"/><rect x="6" y="14" width="5" height="1" fill="#e6ecf3"/><circle cx="12.6" cy="4.3" r="3.7" fill="#12a012" stroke="#0b7a0b" stroke-width="0.6"/><path d="M12.6 2.0 V6.6 M10.3 4.3 H14.899999999999999" stroke="#fff" stroke-width="1.6"/></svg>
<svg style="left:212px;top:439px" width="17" height="17" viewBox="0 0 17 17"><rect x="0" y="5" width="7" height="5" fill="#4f74a0"/><rect x="1" y="6" width="5" height="1" fill="#e6ecf3"/><rect x="1" y="8" width="5" height="1" fill="#e6ecf3"/><rect x="5.5" y="10" width="7" height="3" fill="#4f74a0"/><rect x="6.5" y="11" width="5" height="1" fill="#e6ecf3"/><rect x="0" y="12" width="7" height="5" fill="#4f74a0"/><rect x="1" y="13" width="5" height="1" fill="#e6ecf3"/><rect x="1" y="15" width="5" height="1" fill="#e6ecf3"/><circle cx="12.7" cy="4.3" r="3.7" fill="#12a012" stroke="#0b7a0b" stroke-width="0.6"/><path d="M12.7 2.0 V6.6 M10.399999999999999 4.3 H15.0" stroke="#fff" stroke-width="1.6"/></svg>
<svg style="left:237px;top:439px" width="17" height="17" viewBox="0 0 17 17"><rect x="0" y="5" width="7" height="5" fill="#4f74a0"/><rect x="1" y="6" width="5" height="1" fill="#e6ecf3"/><rect x="1" y="8" width="5" height="1" fill="#e6ecf3"/><rect x="5.5" y="10" width="7" height="3" fill="#9db1c8"/><rect x="6.5" y="11" width="5" height="1" fill="#eef2f6"/><rect x="0" y="12" width="7" height="5" fill="#4f74a0"/><rect x="1" y="13" width="5" height="1" fill="#e6ecf3"/><rect x="1" y="15" width="5" height="1" fill="#e6ecf3"/><circle cx="12.5" cy="4.7" r="3.7" fill="#c3161c" stroke="#9a0f14" stroke-width="0.6"/><path d="M11.0 3.2 L14.0 6.2 M14.0 3.2 L11.0 6.2" stroke="#fff" stroke-width="1.2"/></svg>
<svg style="left:263px;top:440px" width="14" height="17" viewBox="0 0 14 17"><path d="M6.6 0 L13.2 7 H10 V16 H3 V7 H0 Z" fill="#a0a0a0"/></svg>
<svg style="left:288px;top:440px" width="14" height="17" viewBox="0 0 14 17"><defs><linearGradient id="gd" x1="0" x2="1"><stop offset="0" stop-color="#7d9cc0"/><stop offset="1" stop-color="#3f5f85"/></linearGradient></defs>
<path d="M3.2 0.5 H10.2 V9 H13.4 L6.7 16 L0 9 H3.2 Z" fill="url(#gd)" stroke="#2d4566" stroke-width="0.8"/></svg>
<svg style="left:312px;top:441px" width="17" height="14" viewBox="0 0 17 14"><path d="M0 6.5 L7 0 V3 H16 V10 H7 V13 Z" fill="#a0a0a0"/></svg>
<svg style="left:337px;top:441px" width="17" height="14" viewBox="0 0 17 14"><path d="M16 6.5 L9 0 V3 H0 V10 H9 V13 Z" fill="#a0a0a0"/></svg>
<svg style="left:362px;top:440px" width="17" height="16" viewBox="0 0 17 16"><rect x="0.7" y="0.7" width="15.2" height="14.2" fill="#fff" stroke="#5aa248" stroke-width="1.3"/>
<rect x="1" y="1" width="14.6" height="2.2" fill="#5aa348"/><path d="M1.5 2.2 H15" stroke="#cfe6c8" stroke-width="0.7"/>
<path d="M5.8 3.5 V14.5 M10.8 3.5 V14.5 M1 7.3 H15.6 M1 11 H15.6" stroke="#b9dcae" stroke-width="0.9"/></svg>
<svg style="left:1328px;top:443px" width="10" height="10" viewBox="0 0 10 10"><path d="M0.5 0.5 L5 4.5 L9.5 0.5 M0.5 4.5 L5 8.5 L9.5 4.5" fill="none" stroke="#333" stroke-width="1.2"/></svg>
<svg style="left:1347px;top:443px" width="11" height="10" viewBox="0 0 11 10"><rect x="0.6" y="1.2" width="9.8" height="8.2" fill="none" stroke="#111" stroke-width="1.2"/><rect x="0" y="0" width="11" height="2.5" fill="#111"/></svg>
<svg style="left:101px;top:476px" width="7" height="4" viewBox="0 0 7 4"><path d="M0 0 H7 L3.5 4 Z" fill="#111"/></svg>
<svg style="left:305px;top:476px" width="8" height="4" viewBox="0 0 8 4"><path d="M0 0 H8 L4.0 4 Z" fill="#111"/></svg>

</body></html>
